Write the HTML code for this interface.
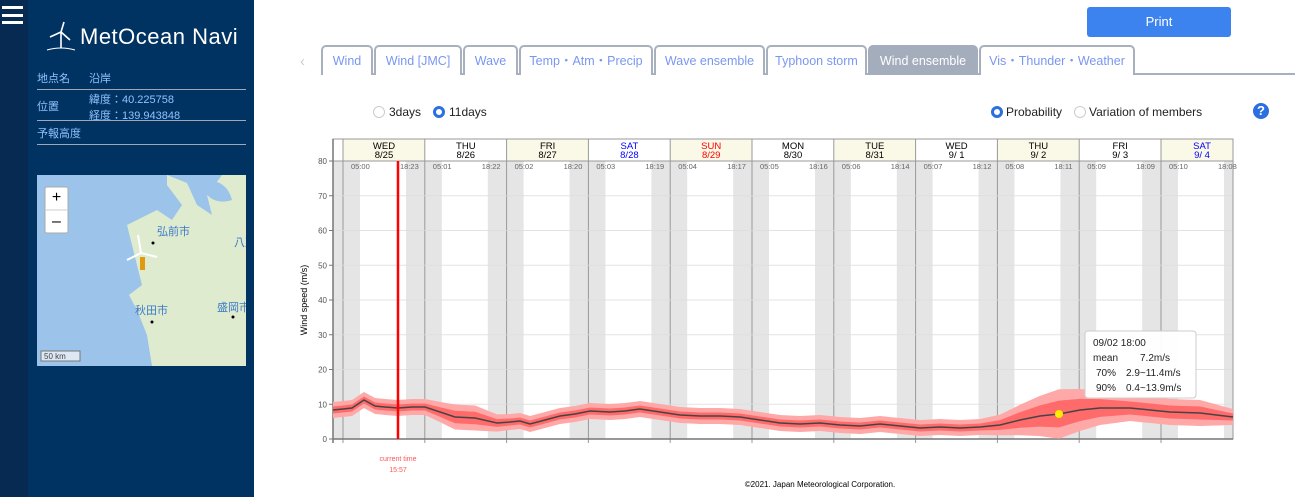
<!DOCTYPE html>
<html><head><meta charset="utf-8"><style>
*{margin:0;padding:0;box-sizing:border-box}
body{width:1295px;height:497px;overflow:hidden;background:#fff;font-family:"Liberation Sans","Noto Sans CJK JP",sans-serif;position:relative}
.strip{position:absolute;left:0;top:0;width:28px;height:497px;background:#062a52}
.side{position:absolute;left:28px;top:0;width:226px;height:497px;background:#003361}
.ham{position:absolute;left:2px;width:21px;height:3px;background:#fff}
.logo{position:absolute;left:80px;top:24px;color:#fff;font-size:22px;letter-spacing:.5px}
.info{position:absolute;left:37px;width:209px;color:#8fc2ff;font-size:11px}
.hr{position:absolute;left:37px;width:209px;height:1px;background:#a0a8b8}
.tab{position:absolute;top:45px;height:30px;border:2px solid #a9b0bd;border-bottom:none;border-radius:5px 5px 0 0;color:#7a97f0;font-size:12.5px;text-align:center;line-height:28px;background:#fff}
.print{position:absolute;left:1087px;top:7px;width:144px;height:30px;background:#3d83f0;border-radius:3px;color:#fff;font-size:13px;text-align:center;line-height:30px}
.lbl{position:absolute;font-size:12px;color:#222}
.rad{position:absolute;width:12px;height:12px;border-radius:50%;border:1px solid #ccc;background:#fff}
.rad.on{border:3.5px solid #2b6fe0}
</style></head><body>
<div class="strip"></div>
<div class="ham" style="top:6px"></div><div class="ham" style="top:14px"></div><div class="ham" style="top:21px"></div>
<div class="side"></div>
<svg style="position:absolute;left:46px;top:20px" width="30" height="32" viewBox="0 0 30 32"><g stroke="#fff" stroke-width="1.6" fill="none"><line x1="15" y1="12" x2="15" y2="28"/><line x1="15" y1="12" x2="18" y2="2"/><line x1="15" y1="12" x2="4" y2="17"/><line x1="15" y1="12" x2="24" y2="20"/><path d="M1 30 Q15 26 29 30" stroke-width="1"/></g></svg>
<div class="logo">MetOcean Navi</div>
<div class="info" style="top:70px">地点名<span style="position:absolute;left:52px">沿岸</span></div>
<div class="hr" style="top:89px"></div>
<div class="info" style="top:98px">位置</div>
<div class="info" style="top:91px;left:89px;width:150px">緯度：40.225758<br>経度：139.943848</div>
<div class="hr" style="top:120px"></div>
<div class="info" style="top:125px">予報高度</div>
<div class="hr" style="top:144px"></div>
<svg style="position:absolute;left:37px;top:175px" width="209" height="191" viewBox="0 0 209 191">
<rect width="209" height="191" fill="#9cc4ea"/>
<path d="M130 0 L150 8 L160 30 L175 40 L170 20 L185 0 L209 0 L209 191 L115 191 L110 160 L100 135 L92 120 L105 110 L100 90 L95 70 L90 50 L120 35 L135 45 L145 30 L130 10Z" fill="#dfebcf"/>
<path d="M168 5 Q190 5 195 25 Q180 30 170 20Z" fill="#9cc4ea"/>
<rect x="8" y="12" width="23" height="46" fill="#fff" stroke="#aaa" rx="2"/>
<line x1="8" y1="35" x2="31" y2="35" stroke="#ccc"/>
<text x="19.5" y="27" font-size="16" text-anchor="middle" font-family="Liberation Sans">+</text>
<text x="19.5" y="51" font-size="16" text-anchor="middle" font-family="Liberation Sans">–</text>
<text x="120" y="60" font-size="11" fill="#3b7ac8">弘前市</text>
<text x="197" y="71" font-size="11" fill="#3b7ac8">八戸</text>
<text x="98" y="139" font-size="11" fill="#3b7ac8">秋田市</text>
<text x="180" y="136" font-size="11" fill="#3b7ac8">盛岡市</text>
<circle cx="116" cy="68" r="1.5"/><circle cx="115" cy="147" r="1.5"/><circle cx="196" cy="142" r="1.5"/>
<rect x="103" y="82" width="5" height="13" fill="#e09a10"/>
<g stroke="#fff" stroke-width="2"><line x1="104" y1="78" x2="101" y2="60"/><line x1="104" y1="78" x2="90" y2="85"/><line x1="104" y1="78" x2="120" y2="82"/></g>
<rect x="4" y="176" width="39" height="10" fill="#dde8f4" stroke="#777"/>
<text x="7" y="184" font-size="8" fill="#444">50 km</text>
</svg>

<div class="print">Print</div>
<div style="position:absolute;left:300px;top:53px;color:#ccc;font-size:15px">‹</div>
<div style="position:absolute;left:321px;top:73px;width:974px;height:2px;background:#a9b0bd"></div>
<div class="tab" style="left:321px;width:52px">Wind</div>
<div class="tab" style="left:374px;width:88px">Wind [JMC]</div>
<div class="tab" style="left:463px;width:55px">Wave</div>
<div class="tab" style="left:519px;width:134px">Temp・Atm・Precip</div>
<div class="tab" style="left:654px;width:111px">Wave ensemble</div>
<div class="tab" style="left:766px;width:101px">Typhoon storm</div>
<div class="tab" style="left:868px;width:110px;background:#a4adbc;color:#fff;border-color:#a4adbc">Wind ensemble</div>
<div class="tab" style="left:979px;width:156px">Vis・Thunder・Weather</div>

<div class="rad" style="left:373px;top:106px"></div><div class="lbl" style="left:389px;top:105px">3days</div>
<div class="rad on" style="left:433px;top:106px"></div><div class="lbl" style="left:449px;top:105px">11days</div>
<div class="rad on" style="left:991px;top:106px"></div><div class="lbl" style="left:1006px;top:105px">Probability</div>
<div class="rad" style="left:1074px;top:106px"></div><div class="lbl" style="left:1089px;top:105px">Variation of members</div>
<div style="position:absolute;left:1253px;top:103px;width:16px;height:16px;border-radius:50%;background:#2b6fe0;color:#fff;font-weight:bold;font-size:13px;text-align:center;line-height:16px">?</div>

<svg id="ch" style="position:absolute;left:0;top:0" width="1295" height="497" font-family="Liberation Sans">
<g id="bg"></g>
<text transform="translate(307,300) rotate(-90)" font-size="9" text-anchor="middle" fill="#000">Wind speed (m/s)</text>
<polygon id="outer" fill="#ffa8a8"/>
<polygon id="inner" fill="#ff6b6b"/>
<polyline id="mean" fill="none" stroke="#444" stroke-width="1.5"/>
<line x1="398" y1="161" x2="398" y2="439" stroke="#f00" stroke-width="2.5"/>
<circle cx="1059" cy="414" r="4" fill="#ffee00"/>
<text x="398" y="461" font-size="7" fill="#f55" text-anchor="middle">current time</text>
<text x="398" y="472" font-size="7" fill="#f55" text-anchor="middle">15:57</text>
<text x="820" y="487" font-size="8" fill="#000" text-anchor="middle">©2021. Japan Meteorological Corporation.</text>
<rect x="1085" y="331" width="111" height="67" rx="3" fill="#fff" fill-opacity=".95" stroke="#ccc"/>
<g font-size="10" fill="#222"><text x="1093" y="346">09/02 18:00</text><text x="1093" y="361">mean</text><text x="1140" y="361">7.2m/s</text><text x="1096" y="376">70%</text><text x="1126" y="376">2.9~11.4m/s</text><text x="1096" y="391">90%</text><text x="1126" y="391">0.4~13.9m/s</text></g>
</svg>
<script>
var NS="http://www.w3.org/2000/svg",bg=document.getElementById('bg'),h='';
h+='<rect x="333" y="161" width="900" height="278" fill="#fff"/>';
h+='<rect x="333" y="161" width="10" height="278" fill="#e5e5e5"/>';
var days=[["WED","8/25","#000",1],["THU","8/26","#000",0],["FRI","8/27","#000",1],["SAT","8/28","#00f",0],["SUN","8/29","#f00",1],["MON","8/30","#000",0],["TUE","8/31","#000",1],["WED","9/ 1","#000",0],["THU","9/ 2","#000",1],["FRI","9/ 3","#000",0],["SAT","9/ 4","#00f",1]];
var rs=["05:00","05:01","05:02","05:03","05:04","05:05","05:06","05:07","05:08","05:09","05:10"],ss=["18:23","18:22","18:20","18:19","18:17","18:16","18:14","18:12","18:11","18:09","18:08"];
for(var i=0;i<11;i++){var d=343+81.8*i,w=Math.min(81.8,1233-d);
h+='<rect x="'+d+'" y="139" width="'+w+'" height="22" fill="'+(days[i][3]?'#faf8e6':'#fff')+'"/>';
h+='<rect x="'+d+'" y="161" width="17" height="278" fill="#e5e5e5"/>';
h+='<rect x="'+(d+63)+'" y="161" width="'+Math.max(0,w-63)+'" height="278" fill="#e5e5e5"/>';
h+='<line x1="'+d+'" y1="139" x2="'+d+'" y2="443" stroke="#999" stroke-width="1"/>';
h+='<text x="'+(d+41)+'" y="149" font-size="9.5" text-anchor="middle" fill="'+days[i][2]+'">'+days[i][0]+'</text>';
h+='<text x="'+(d+41)+'" y="158" font-size="9.5" text-anchor="middle" fill="'+days[i][2]+'">'+days[i][1]+'</text>';
h+='<text x="'+(d+8)+'" y="169" font-size="7.5" fill="#666">'+rs[i]+'</text>';
h+='<text x="'+(d+57)+'" y="169" font-size="7.5" fill="#666">'+ss[i]+'</text>';}
for(var k=0;k<=8;k++){var y=439-k*34.75;h+='<line x1="333" y1="'+y+'" x2="1233" y2="'+y+'" stroke="#ddd" stroke-width="1" opacity=".8"/>';h+='<text x="327" y="'+(y+3)+'" font-size="8" text-anchor="end" fill="#555">'+(k*10)+'</text><line x1="329" y1="'+y+'" x2="333" y2="'+y+'" stroke="#777"/>';}
h+='<rect x="333" y="139" width="900" height="300" fill="none" stroke="#999"/>';
h+='<line x1="333" y1="161" x2="1233" y2="161" stroke="#999"/><line x1="333" y1="139" x2="333" y2="443" stroke="#777" stroke-width="1.5"/><line x1="333" y1="439" x2="1233" y2="439" stroke="#777" stroke-width="1.5"/>';
bg.innerHTML=h;
var P=[[333,410],[343,409],[352,408],[364,400],[375,406],[385,407],[398,408],[412,407],[425,407],[440,412],[455,417],[475,418],[497,423],[510,422],[520,421],[530,424],[545,420],[560,416],[575,414],[590,411],[610,412],[625,411],[640,409],[660,412],[680,415],[700,416],[720,416],[740,417],[760,420],[780,423],[800,424],[820,423],[840,425],[860,426],[880,424],[900,426],[920,428],[940,427],[960,428],[980,427],[1000,425],[1020,420],[1040,416],[1059,414],[1080,410],[1100,408],[1130,408],[1150,410],[1170,412],[1200,413],[1233,417]];
function hw(x){var v=3.5;if(x>430&&x<500)v+=3*Math.sin((x-430)/70*Math.PI);if(x>=990&&x<1233)v+=(x<1060?(x-990)/70*10:Math.max(3,10-(x-1060)/60*7));return v;}
var mt='',up1=[],lo1=[],up2=[],lo2=[];
P.forEach(function(p){var x=p[0],y=p[1],a=hw(x),b=a*1.7+2;mt+=x+','+y+' ';
up1.push(x+','+(y-a));lo1.unshift(x+','+Math.min(439,y+a));up2.push(x+','+(y-b));lo2.unshift(x+','+Math.min(439,y+b));});
document.getElementById('mean').setAttribute('points',mt);
document.getElementById('inner').setAttribute('points',up1.concat(lo1).join(' '));
document.getElementById('outer').setAttribute('points',up2.concat(lo2).join(' '));
</script>
</body></html>
